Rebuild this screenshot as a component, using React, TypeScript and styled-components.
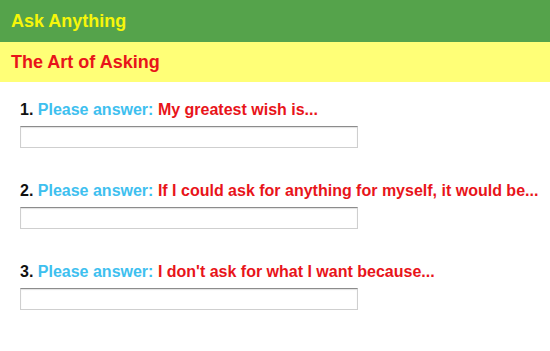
import styled, { createGlobalStyle } from 'styled-components';

const GlobalStyle = createGlobalStyle`
  html, body {
    margin: 0;
    padding: 0;
    background: #ffffff;
  }
  body {
    font-family: 'Liberation Sans', Arial, sans-serif;
  }
`;

const questions = [
  'My greatest wish is...',
  'If I could ask for anything for myself, it would be...',
  "I don't ask for what I want because...",
];

const Page = styled.div`
  width: 550px;
  height: 351px;
  overflow: hidden;
  background: #ffffff;
`;

const Banner = styled.header<{ $bg: string; $fg: string; $height: number }>`
  display: flex;
  align-items: center;
  height: ${(p) => p.$height}px;
  padding-left: 11px;
  background: ${(p) => p.$bg};
  color: ${(p) => p.$fg};
  font-size: 18px;
  font-weight: bold;
`;

const QuestionList = styled.ol`
  list-style: none;
  margin: 0;
  padding: 19px 0 0 20px;
  display: flex;
  flex-direction: column;
  gap: 34px;
`;

const Question = styled.li`
  display: flex;
  flex-direction: column;
  gap: 7px;
`;

const Label = styled.label`
  font-size: 16px;
  font-weight: bold;
  line-height: 18px;
  color: #111111;
`;

const Prompt = styled.span`
  color: #3ec0ef;
`;

const Ask = styled.span`
  color: #e8141a;
`;

const Answer = styled.input`
  box-sizing: border-box;
  width: 338px;
  height: 22px;
  margin: 0;
  padding: 2px 4px;
  border: 1px solid #cfcfcf;
  border-top-color: #8c8c8c;
  box-shadow: inset 0 1px 1px rgba(0, 0, 0, 0.12);
  background: #ffffff;
  font-family: inherit;
  font-size: 13px;
  outline: none;
`;

export default function App() {
  return (
    <Page>
      <GlobalStyle />
      <Banner $bg="#55a34b" $fg="#f6f60a" $height={42}>
        Ask Anything
      </Banner>
      <Banner $bg="#ffff77" $fg="#e8141a" $height={40}>
        The Art of Asking
      </Banner>
      <QuestionList>
        {questions.map((q, i) => (
          <Question key={q}>
            <Label>
              {i + 1}. <Prompt>Please answer:</Prompt> <Ask>{q}</Ask>
            </Label>
            <Answer type="text" />
          </Question>
        ))}
      </QuestionList>
    </Page>
  );
}
